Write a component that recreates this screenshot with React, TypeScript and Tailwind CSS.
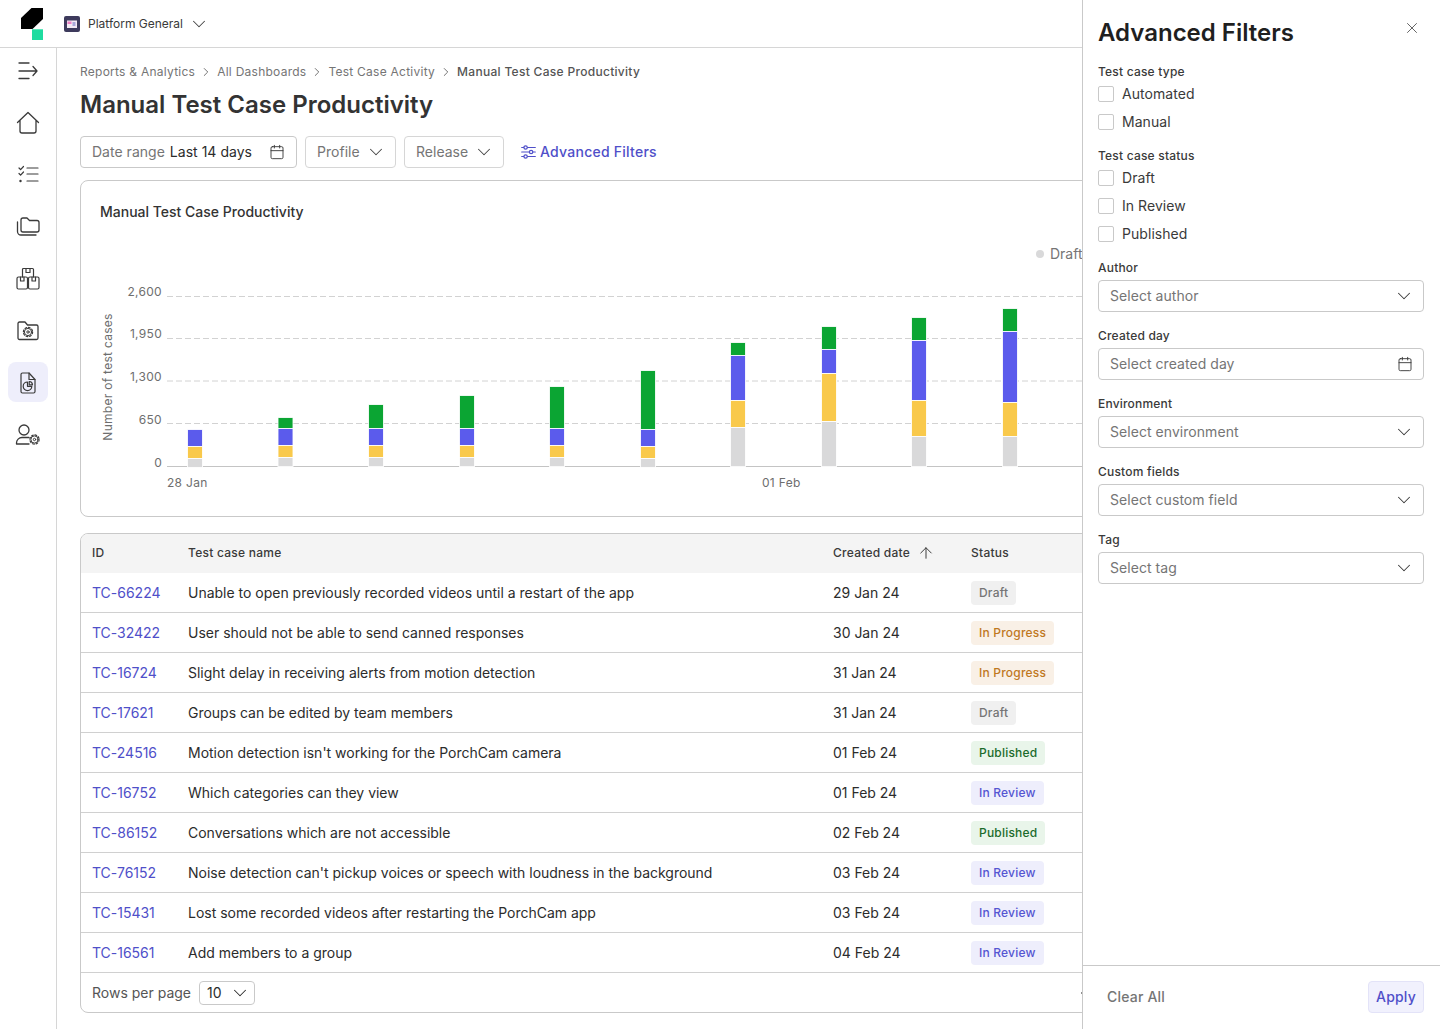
import React from 'react';
import { Calendar, ChevronDown, ChevronLeft, ChevronRight, ArrowUp, X } from 'lucide-react';

const draftBadge = 'bg-[#f0f0f0] text-[#757575]';
const progressBadge = 'bg-[#f9f0e6] text-[#c0781e]';
const publishedBadge = 'bg-[#e9f5ea] text-[#1b6b2c]';
const reviewBadge = 'bg-[#eeeefc] text-[#5555d2]';

const rows = [
  { id: 'TC-66224', name: 'Unable to open previously recorded videos until a restart of the app', date: '29 Jan 24', status: 'Draft', badge: draftBadge },
  { id: 'TC-32422', name: 'User should not be able to send canned responses', date: '30 Jan 24', status: 'In Progress', badge: progressBadge },
  { id: 'TC-16724', name: 'Slight delay in receiving alerts from motion detection', date: '31 Jan 24', status: 'In Progress', badge: progressBadge },
  { id: 'TC-17621', name: 'Groups can be edited by team members', date: '31 Jan 24', status: 'Draft', badge: draftBadge },
  { id: 'TC-24516', name: "Motion detection isn't working for the PorchCam camera", date: '01 Feb 24', status: 'Published', badge: publishedBadge },
  { id: 'TC-16752', name: 'Which categories can they view', date: '01 Feb 24', status: 'In Review', badge: reviewBadge },
  { id: 'TC-86152', name: 'Conversations which are not accessible', date: '02 Feb 24', status: 'Published', badge: publishedBadge },
  { id: 'TC-76152', name: "Noise detection can't pickup voices or speech with loudness in the background", date: '03 Feb 24', status: 'In Review', badge: reviewBadge },
  { id: 'TC-15431', name: 'Lost some recorded videos after restarting the PorchCam app', date: '03 Feb 24', status: 'In Review', badge: reviewBadge },
  { id: 'TC-16561', name: 'Add members to a group', date: '04 Feb 24', status: 'In Review', badge: reviewBadge },
];

// each bar: x, then [top, bottom] of green, blue, yellow, gray segments
const bars: { x: number; segs: [string, number, number][] }[] = [
  { x: 188, segs: [['#5b5bec', 430, 446], ['#f9c94b', 447, 458], ['#d9d9da', 459, 467]] },
  { x: 278.5, segs: [['#0ba533', 418, 428], ['#5b5bec', 429, 445], ['#f9c94b', 446, 457], ['#d9d9da', 458, 466]] },
  { x: 369, segs: [['#0ba533', 405, 428], ['#5b5bec', 429, 445], ['#f9c94b', 446, 457], ['#d9d9da', 458, 466]] },
  { x: 460, segs: [['#0ba533', 396, 428], ['#5b5bec', 429, 445], ['#f9c94b', 446, 457], ['#d9d9da', 458, 466]] },
  { x: 550, segs: [['#0ba533', 387, 428], ['#5b5bec', 429, 445], ['#f9c94b', 446, 457], ['#d9d9da', 458, 466]] },
  { x: 641, segs: [['#0ba533', 371, 429], ['#5b5bec', 430, 446], ['#f9c94b', 447, 458], ['#d9d9da', 459, 467]] },
  { x: 731, segs: [['#0ba533', 343, 355], ['#5b5bec', 356, 400], ['#f9c94b', 401, 427], ['#d9d9da', 428, 466]] },
  { x: 822, segs: [['#0ba533', 327, 349], ['#5b5bec', 350, 373], ['#f9c94b', 374, 421], ['#d9d9da', 422, 466]] },
  { x: 912, segs: [['#0ba533', 318, 340], ['#5b5bec', 341, 400], ['#f9c94b', 401, 436], ['#d9d9da', 437, 466]] },
  { x: 1003, segs: [['#0ba533', 309, 331], ['#5b5bec', 332, 402], ['#f9c94b', 403, 436], ['#d9d9da', 437, 466]] },
];

const iconProps = {
  fill: 'none',
  stroke: '#3a3a3a',
  strokeWidth: 1.3,
  strokeLinecap: 'round' as const,
  strokeLinejoin: 'round' as const,
};

const Gear = ({ cx, cy }: { cx: number; cy: number }) => (
  <g>
    <circle cx={cx} cy={cy} r={3.6} fill="none" stroke="#3a3a3a" strokeWidth={1} />
    <circle cx={cx} cy={cy} r={4.6} fill="none" stroke="#3a3a3a" strokeWidth={1.2} strokeDasharray="1.8 1.8" />
    <circle cx={cx} cy={cy} r={1.2} fill="none" stroke="#3a3a3a" strokeWidth={1} />
  </g>
);

const MenuIcon = () => (
  <svg width="24" height="24" viewBox="0 0 24 24" {...iconProps}>
    <path d="M3 4h10M3 12h18M3 19.500h10M17 7.500 21 12l-4 4.500" />
  </svg>
);
const HomeIcon = () => (
  <svg width="24" height="24" viewBox="0 0 24 24" {...iconProps}>
    <path d="M1.500 11.500 12 1.500l10.500 10M4 9.500V20a2 2 0 0 0 2 2h12a2 2 0 0 0 2-2V9.500" />
  </svg>
);
const ChecksIcon = () => (
  <svg width="24" height="24" viewBox="0 0 24 24" {...iconProps} strokeWidth={1.2}>
    <path d="M11 5h11M11 11h11M11 18h11M3 5l1.600 1.700L7.500 3.500M3 10.500l1.600 1.700 2.900-3.200" />
    <circle cx="4.500" cy="18" r="0.600" fill="#3a3a3a" />
  </svg>
);
const FoldersIcon = () => (
  <svg width="24" height="24" viewBox="0 0 24 24" {...iconProps}>
    <path d="M5 15V5a2 2 0 0 1 2-2h4l2.500 2.500H21a2 2 0 0 1 2 2V15a2 2 0 0 1-2 2H7a2 2 0 0 1-2-2Z" />
    <path d="M1.500 7v9.500A3.500 3.500 0 0 0 5 20h15" />
  </svg>
);
const BoxesIcon = () => (
  <svg width="24" height="24" viewBox="0 0 24 24" {...iconProps} strokeWidth={1.2}>
    <path d="M6.500 10V2.500a1 1 0 0 1 1-1h9a1 1 0 0 1 1 1V10M10 1.500v4h4v-4" />
    <rect x="1" y="10" width="10.500" height="12" rx="1.500" />
    <rect x="12.500" y="10" width="10.500" height="12" rx="1.500" />
    <path d="M4.500 10v4h3.500v-4M16 10v4h3.500v-4" />
  </svg>
);
const FolderCogIcon = () => (
  <svg width="24" height="24" viewBox="0 0 24 24" {...iconProps}>
    <path d="M2 19V4.500A1.500 1.500 0 0 1 3.500 3H9l2.500 3h9A1.500 1.500 0 0 1 22 7.500V19a1.500 1.500 0 0 1-1.500 1.500h-17A1.500 1.500 0 0 1 2 19Z" />
    <Gear cx={12} cy={13} />
  </svg>
);
const FilePieIcon = () => (
  <svg width="24" height="24" viewBox="0 0 24 24" {...iconProps} strokeWidth={1.2}>
    <path d="M6.500 3h6.500l6 6.500V21.500a1.500 1.500 0 0 1-1.500 1.500h-11A1.500 1.500 0 0 1 5 21.500v-17A1.500 1.500 0 0 1 6.500 3Z" />
    <path d="M13 3v6.500h6" />
    <path d="M11.500 12a4.300 4.300 0 1 0 4.300 4.300h-4.300Z" />
    <path d="M13.200 11.500a3.500 3.500 0 0 1 3.300 3.300h-3.300Z" />
  </svg>
);
const UserCogIcon = () => (
  <svg width="26" height="24" viewBox="0 0 26 24" {...iconProps}>
    <circle cx="9" cy="7" r="5" />
    <path d="M14 14.500H7A5.500 5.500 0 0 0 1.500 20v1H14" />
    <Gear cx={19.500} cy={16.500} />
  </svg>
);

const SlidersIcon = () => (
  <svg width="15" height="14" viewBox="0 0 15 14" fill="none" stroke="#4f4fc9" strokeWidth="1.200" strokeLinecap="round">
    <path d="M.7 2.500h2M6.500 2.500h7.800M.7 7h7.500M12 7h2.300M.7 11.500h2M6.500 11.500h7.800" />
    <circle cx="4.600" cy="2.500" r="1.700" />
    <circle cx="10.100" cy="7" r="1.700" />
    <circle cx="4.600" cy="11.500" r="1.700" />
  </svg>
);

const Chart = () => {
  const grid = [296.5, 338.5, 381, 423.500];
  const ticks = [
    { label: '2,600', y: 293 },
    { label: '1,950', y: 335 },
    { label: '1,300', y: 378 },
    { label: '650', y: 421 },
    { label: '0', y: 464 },
  ];
  return (
    <svg width="1334" height="260" viewBox="81 240 1334 260" className="block" style={{ fontFamily: 'Inter, sans-serif' }}>
      {grid.map((y) => (
        <line key={y} x1="167" x2="1415" y1={y} y2={y} stroke="#d2d2d2" strokeDasharray="6 3" />
      ))}
      <line x1="167" x2="1415" y1="466.500" y2="466.500" stroke="#c4c4c4" />
      {ticks.map((t) => (
        <text key={t.label} x="162" y={t.y} textAnchor="end" dominantBaseline="middle" fontSize="12" fill="#6e6e6e" letterSpacing="0.3">
          {t.label}
        </text>
      ))}
      <text transform="translate(112 377) rotate(-90)" textAnchor="middle" fontSize="12" fill="#6e6e6e" letterSpacing="0.28">
        Number of test cases
      </text>
      {bars.map((b) => (
        <g key={b.x}>
          {b.segs.map(([color, top, bottom]) => (
            <rect key={color} x={b.x - 0.5} y={top - 0.5} width={15} height={bottom - top + 1} fill={color} stroke="#fff" strokeOpacity="0.85" strokeWidth="1" />
          ))}
        </g>
      ))}
      <text x="167" y="487" fontSize="12" fill="#6e6e6e" letterSpacing="0.3">28 Jan</text>
      <text x="762" y="487" fontSize="12" fill="#6e6e6e" letterSpacing="0.3">01 Feb</text>
      <circle cx="1040" cy="254" r="4" fill="#d9d9da" />
      <text x="1050" y="259" fontSize="14" fill="#757575">Draft</text>
    </svg>
  );
};

const SelectField = ({ label, placeholder, calendar }: { label: string; placeholder: string; calendar?: boolean }) => (
  <div className="flex flex-col gap-1">
    <div className="text-xs leading-4 font-medium tracking-[0.2px] text-[#3a3a3a]">{label}</div>
    <div className="flex h-8 items-center justify-between rounded border border-[#c9c9c9] px-[11px] text-sm tracking-[0.05px] text-[#757575]">
      <span>{placeholder}</span>
      {calendar ? (
        <Calendar size={16} strokeWidth={1.4} className="-mr-px text-[#3a3a3a]" />
      ) : (
        <ChevronDown size={22} strokeWidth={1.1} className="-mr-[3px] text-[#3a3a3a]" />
      )}
    </div>
  </div>
);

const CheckRow = ({ label }: { label: string }) => (
  <div className="flex h-5 items-center gap-2 text-sm tracking-[0.05px] text-[#3a3a3a]">
    <span className="h-4 w-4 rounded-[2px] border border-[#c9c9c9] bg-white"></span>
    <span>{label}</span>
  </div>
);

const FilterPanel = () => (
  <aside className="absolute top-0 right-0 bottom-0 flex w-[358px] flex-col border-l border-[#c9c9c9] bg-white">
    <div className="flex flex-1 flex-col pt-[17px] pr-4 pl-[15px]">
      <div className="mb-[15px] flex items-start justify-between">
        <h2 className="text-2xl leading-8 font-semibold text-[#1f1f1f]">Advanced Filters</h2>
        <X size={18} strokeWidth={1.1} className="mt-[2px] mr-[3px] text-[#444]" />
      </div>
      <div className="flex flex-col gap-4">
        <div>
          <div className="mb-1 text-xs leading-4 font-medium tracking-[0.2px] text-[#3a3a3a]">Test case type</div>
          <div className="flex flex-col gap-2">
            <CheckRow label="Automated" />
            <CheckRow label="Manual" />
          </div>
        </div>
        <div>
          <div className="mb-1 text-xs leading-4 font-medium tracking-[0.2px] text-[#3a3a3a]">Test case status</div>
          <div className="flex flex-col gap-2">
            <CheckRow label="Draft" />
            <CheckRow label="In Review" />
            <CheckRow label="Published" />
          </div>
        </div>
        <SelectField label="Author" placeholder="Select author" />
        <SelectField label="Created day" placeholder="Select created day" calendar />
        <SelectField label="Environment" placeholder="Select environment" />
        <SelectField label="Custom fields" placeholder="Select custom field" />
        <SelectField label="Tag" placeholder="Select tag" />
      </div>
    </div>
    <div className="flex h-[64px] items-center justify-between border-t border-[#c9c9c9] pr-4 pb-[2px] pl-6">
      <span className="text-sm font-medium tracking-[0.2px] text-[#757575]">Clear All</span>
      <span className="flex h-8 w-14 items-center justify-center rounded border border-[#e3e3f8] bg-[#f1f1fd] text-sm font-medium tracking-[0.2px] text-[#4f4fc9]">
        Apply
      </span>
    </div>
  </aside>
);

const Crumb = ({ label }: { label: string }) => (
  <>
    <span>{label}</span>
    <ChevronRight size={14} strokeWidth={1.4} className="mx-[4px] text-[#555]" />
  </>
);

export default function App() {
  const navIcons = [
    <MenuIcon key="menu" />,
    <HomeIcon key="home" />,
    <ChecksIcon key="checks" />,
    <FoldersIcon key="folders" />,
    <BoxesIcon key="boxes" />,
    <FolderCogIcon key="foldercog" />,
    <FilePieIcon key="pie" />,
    <UserCogIcon key="user" />,
  ];

  return (
    <div className="relative flex h-[1029px] w-[1440px] flex-col overflow-hidden bg-white text-[#2c2c2c]" style={{ fontFamily: 'Inter, sans-serif' }}>
      <header className="flex h-12 flex-none items-center border-b border-[#d6d6d6]">
        <div className="flex w-[64px] flex-none justify-start pl-[21px]">
          <svg width="22" height="32" viewBox="0 0 22 32">
            <path d="M10.500 0H22v11L11.500 21H0V10Z" fill="#000" />
            <rect x="11" y="21.300" width="11" height="10.700" fill="#1fdca0" />
          </svg>
        </div>
        <svg width="16" height="16" viewBox="0 0 16 16" className="flex-none">
          <rect width="16" height="16" rx="2" fill="#3d3a5c" />
          <rect x="3" y="4.500" width="10" height="7.500" fill="#f3e9f3" />
          <rect x="3.500" y="5.500" width="4" height="2.500" fill="#ee7fc3" />
          <rect x="8.500" y="6" width="3" height="4" fill="#a9a7d8" />
        </svg>
        <span className="ml-2 text-xs tracking-[0px] text-[#3a3a3a]">Platform General</span>
        <ChevronDown size={22} strokeWidth={1.1} className="ml-[5px] text-[#444]" />
      </header>

      <div className="flex min-h-0 flex-1">
        <nav className="flex w-[57px] flex-none flex-col items-center gap-3 border-r border-[#d6d6d6] pt-[3px] pr-[1px]">
          {navIcons.map((icon, i) => (
            <div key={i} className={`flex h-10 w-10 items-center justify-center rounded-lg ${i === 6 ? '-mt-px mb-px bg-[#eeeefb]' : ''}`}>
              {icon}
            </div>
          ))}
        </nav>

        <main className="min-w-0 flex-1 px-[23px] pt-4">
          <div className="flex items-center text-xs leading-4 tracking-[0.25px] text-[#757575]">
            <Crumb label="Reports & Analytics" />
            <Crumb label="All Dashboards" />
            <Crumb label="Test Case Activity" />
            <span className="font-medium tracking-[0.3px] text-[#555]">Manual Test Case Productivity</span>
          </div>
          <h1 className="mt-[9px] text-2xl leading-8 font-semibold text-[#333]">Manual Test Case Productivity</h1>

          <div className="mt-[15px] flex items-center gap-2 text-sm tracking-[0.02px]">
            <div className="flex h-8 w-[217px] items-center rounded border border-[#c9c9c9] px-[11px]">
              <span className="text-[#757575]">Date range</span>
              <span className="ml-[5px] text-[#2c2c2c]">Last 14 days</span>
              <Calendar size={16} strokeWidth={1.4} className="ml-auto text-[#3a3a3a]" />
            </div>
            <div className="flex h-8 w-[91px] items-center justify-between rounded border border-[#d6d6d6] px-[11px] text-[#757575]">
              <span>Profile</span>
              <ChevronDown size={22} strokeWidth={1.1} className="-mr-[3px] text-[#444]" />
            </div>
            <div className="flex h-8 w-[100px] items-center justify-between rounded border border-[#d6d6d6] px-[11px] text-[#757575]">
              <span>Release</span>
              <ChevronDown size={22} strokeWidth={1.1} className="-mr-[3px] text-[#444]" />
            </div>
            <div className="ml-[9px] flex items-center gap-[4px] font-medium tracking-[0.25px] text-[#4f4fc9]">
              <SlidersIcon />
              <span>Advanced Filters</span>
            </div>
          </div>

          <section className="mt-3 h-[337px] rounded-lg border border-[#c9c9c9]">
            <div className="px-[19px] pt-[21px] text-sm leading-5 font-medium text-[#333]">Manual Test Case Productivity</div>
            <div className="mt-[18px]">
              <Chart />
            </div>
          </section>

          <section className="mt-4 overflow-hidden rounded-lg border border-[#c9c9c9]">
            <div className="grid h-[39px] grid-cols-[96px_645px_138px_1fr] items-center bg-[#f4f4f4] px-[11px] pb-[2px] text-xs font-medium tracking-[0.25px] text-[#3a3a3a]">
              <span>ID</span>
              <span>Test case name</span>
              <span className="flex items-center gap-[7px]">
                Created date
                <ArrowUp size={18} strokeWidth={1.3} />
              </span>
              <span>Status</span>
            </div>
            {rows.map((row) => (
              <div key={row.id} className="grid h-10 grid-cols-[96px_645px_138px_1fr] items-center border-b border-[#d0d0d0] px-[11px] text-sm tracking-[-0.01px]">
                <span className="text-[#4f4fc9]">{row.id}</span>
                <span>{row.name}</span>
                <span>{row.date}</span>
                <span>
                  <span className={`inline-flex h-6 items-center rounded px-2 text-xs font-medium tracking-[0.2px] ${row.badge}`}>{row.status}</span>
                </span>
              </div>
            ))}
            <div className="flex h-[39px] items-center px-[11px] pt-px text-sm tracking-[0px] text-[#555]">
              <span>Rows per page</span>
              <span className="ml-2 flex h-6 w-14 items-center justify-between rounded border border-[#c9c9c9] pr-[3px] pl-[7px] text-[#2c2c2c]">
                10
                <ChevronDown size={22} strokeWidth={1.1} />
              </span>
              <ChevronLeft size={14} strokeWidth={1.5} className="ml-[821px]" />
            </div>
          </section>
        </main>
      </div>

      <FilterPanel />
    </div>
  );
}
